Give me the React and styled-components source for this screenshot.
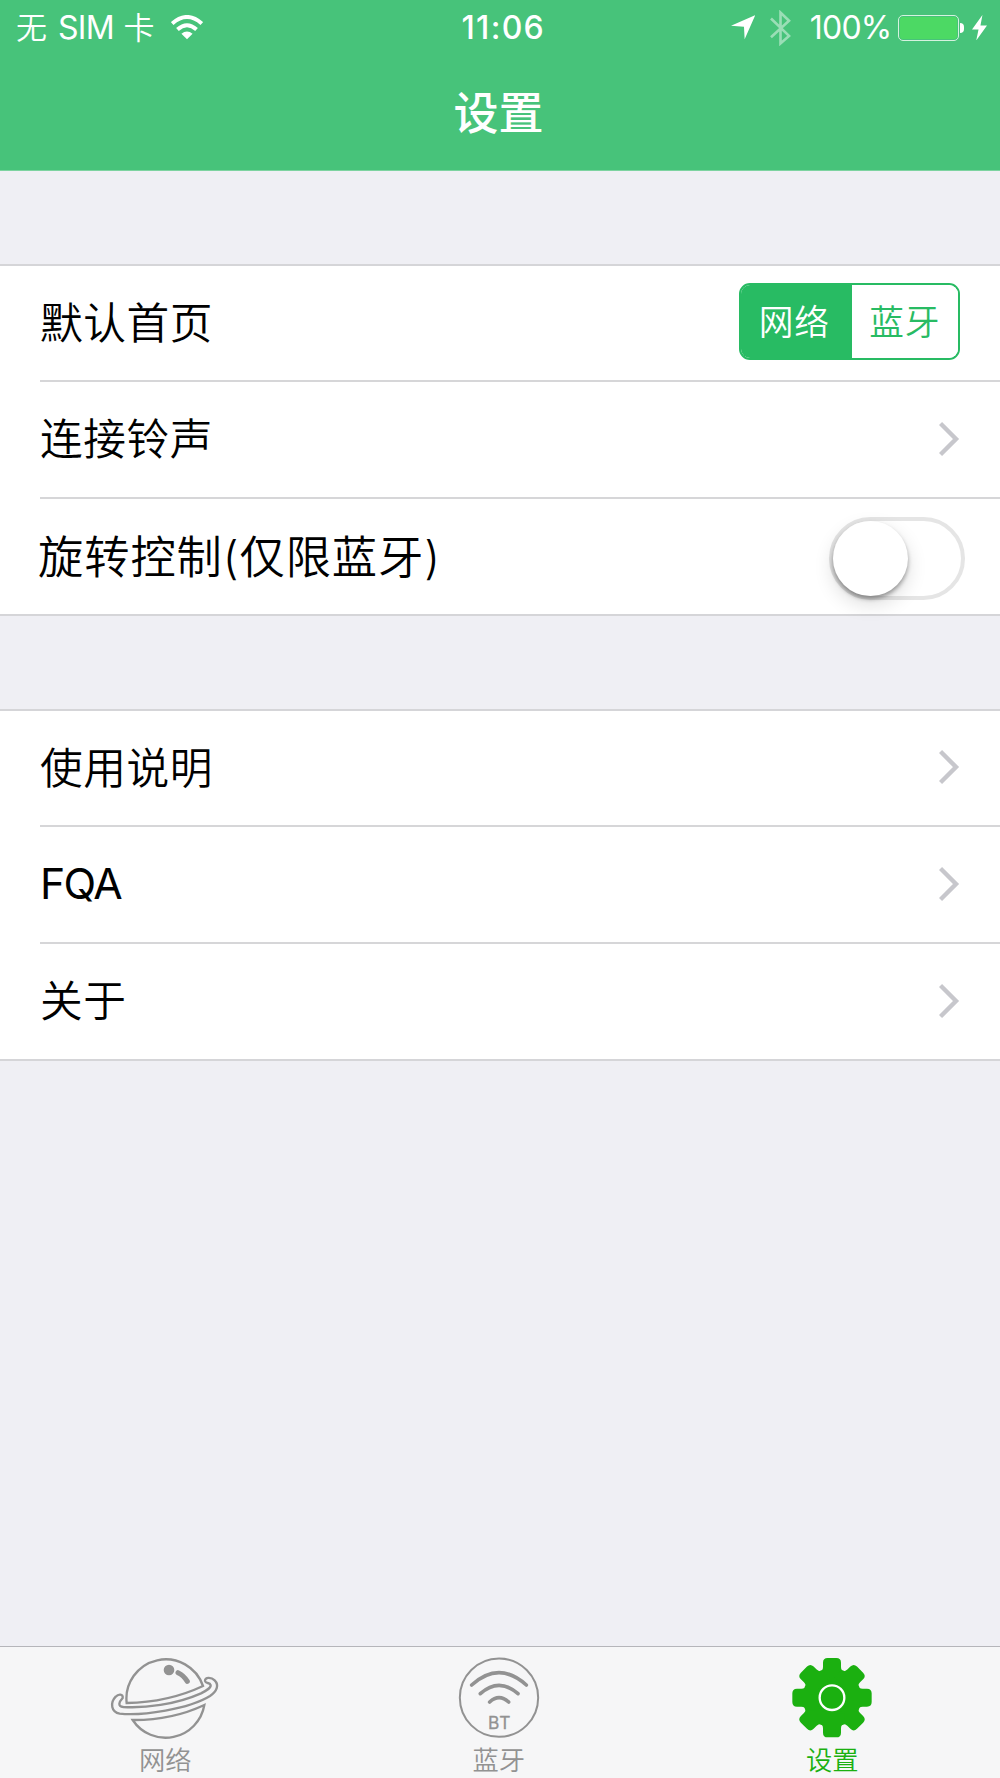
import React, { useState } from "react";
import styled, { createGlobalStyle } from "styled-components";

function App() {
  const [home, setHome] = useState("网络");
  const [rotate, setRotate] = useState(false);

  return (
    <Screen>
      <GlobalStyle />
      <Header>
        <StatusBar>
          <Carrier>
            <span>无</span>
            <Sim>SIM</Sim>
            <span>卡</span>
          </Carrier>
          <WifiIcon />
          <Time>11:06</Time>
          <LocationIcon />
          <BluetoothIcon />
          <Percent>100%</Percent>
          <Battery>
            <BatteryLevel />
          </Battery>
          <BatteryNub />
          <BoltIcon />
        </StatusBar>
        <Title>设置</Title>
      </Header>

      <Content>
        <Group>
          <Row>
            <Label>默认首页</Label>
            <Segmented>
              {["网络", "蓝牙"].map((name) => (
                <Segment
                  key={name}
                  $active={home === name}
                  onClick={() => setHome(name)}
                >
                  {name}
                </Segment>
              ))}
            </Segmented>
          </Row>
          <Row>
            <Label>连接铃声</Label>
            <Chevron />
          </Row>
          <Row>
            <Label $large>旋转控制(仅限蓝牙)</Label>
            <Switch $on={rotate} onClick={() => setRotate(!rotate)}>
              <Knob />
            </Switch>
          </Row>
        </Group>

        <Group>
          <Row>
            <Label>使用说明</Label>
            <Chevron />
          </Row>
          <Row>
            <LatinLabel>FQA</LatinLabel>
            <Chevron />
          </Row>
          <Row>
            <Label>关于</Label>
            <Chevron />
          </Row>
        </Group>
      </Content>

      <TabBar>
        <Tab>
          <PlanetIcon />
          <TabLabel>网络</TabLabel>
        </Tab>
        <Tab>
          <BtIcon />
          <TabLabel>蓝牙</TabLabel>
        </Tab>
        <Tab $active>
          <GearIcon />
          <TabLabel>设置</TabLabel>
        </Tab>
      </TabBar>
    </Screen>
  );
}

export default App;

/* Icons */

const WifiIcon = () => (
  <Wifi viewBox="0 0 96 76" fill="none" stroke="#fff" strokeWidth="12">
    <path d="M3 26Q48 -14 93 26" />
    <path d="M19 44Q48 18 77 44" />
    <path d="M31 57Q48 44 65 57L48 74Z" fill="#fff" stroke="none" />
  </Wifi>
);

const LocationIcon = () => (
  <Location viewBox="0 0 73 73">
    <path d="M0 32L73 0L41 73L39 35Z" fill="#fff" />
  </Location>
);

const BluetoothIcon = () => (
  <Bluetooth viewBox="0 0 64 108" fill="none" stroke="#fff" strokeWidth="8">
    <path d="M3 25L58 78L32 101V7L58 32L3 82" />
  </Bluetooth>
);

const BoltIcon = () => (
  <Bolt viewBox="0 0 46 78">
    <path d="M32 0L0 44H20L13 78L46 32H26Z" fill="#fff" />
  </Bolt>
);

const Chevron = () => (
  <ChevronSvg viewBox="0 0 21 36" fill="none" stroke="#c7c7cc">
    <path d="M1.5 2.5L17 18L1.5 33.5" strokeWidth="4.4" />
  </ChevronSvg>
);

const PlanetIcon = () => (
  <TabSvg $width={114} viewBox="57 66 342 246">
    <g fill="none" stroke="currentColor" strokeWidth="7">
      <path d="M113 204A118 118 0 0 1 342 153Q238 202 113 204Z" />
      <path d="M131 255Q248 256 346 210A118 118 0 0 1 131 255Z" />
      <path d="M101 189C103 176 88 176 80 185C62 204 67 232 92 236C160 243 300 222 363 183C384 169 391 150 377 136C367 126 347 126 348 138C350 147 362 141 365 150C366 160 350 168 336 175C260 209 165 220 103 216C84 214 91 200 101 189Z" />
    </g>
    <circle cx="240" cy="105" r="16" fill="currentColor" />
    <path
      d="M267 113Q284 121 295 139"
      fill="none"
      stroke="currentColor"
      strokeWidth="15"
      strokeLinecap="round"
    />
  </TabSvg>
);

const BtIcon = () => (
  <TabSvg $width={82} viewBox="83 66 246 246">
    <g fill="none" stroke="currentColor" strokeLinecap="round">
      <circle cx="206" cy="188" r="117.5" strokeWidth="6" />
      <path d="M124 150Q206 76 288 150" strokeWidth="11" />
      <path d="M150 176Q206 126 263 176" strokeWidth="11" />
      <path d="M178 201Q206 175 235 201" strokeWidth="11" />
    </g>
    <BtText x="208" y="283" textAnchor="middle">
      BT
    </BtText>
  </TabSvg>
);

const GearIcon = () => (
  <TabSvg $width={82} viewBox="93 66 246 246">
    <g fill="currentColor">
      <circle cx="216" cy="188" r="88" />
      {[0, 45, 90, 135, 180, 225, 270, 315].map((angle) => (
        <path
          key={angle}
          transform={`rotate(${angle} 216 188)`}
          d="M178 112Q189 108 189 96V83Q189 69 203 69H229Q243 69 243 83V96Q243 108 254 112V140H178Z"
        />
      ))}
    </g>
    <circle cx="216" cy="188" r="37" fill="none" stroke="#fff" strokeWidth="7" />
  </TabSvg>
);

/* Styles */

const GlobalStyle = createGlobalStyle`
  * {
    box-sizing: border-box;
  }
  body {
    margin: 0;
    background-color: #efeff4;
    font-family: Inter, "Noto Sans CJK SC", sans-serif;
  }
  svg {
    display: block;
    flex-shrink: 0;
  }
`;

const Screen = styled.div`
  display: flex;
  flex-direction: column;
  width: 1000px;
  height: 1778px;
  overflow: hidden;
  background-color: #efeff4;
`;

const Header = styled.header`
  height: 171px;
  background-color: #47c37a;
  border-bottom: 1px solid #7dd3a0;
  color: white;
`;

const StatusBar = styled.div`
  display: flex;
  align-items: center;
  height: 55px;
  padding-left: 16px;
`;

const Carrier = styled.div`
  display: flex;
  align-items: center;
  width: 155px;
  font-size: 31px;
  font-weight: 350;
  line-height: 54px;
`;

const Sim = styled.span`
  margin: 0 9.5px 0 11px;
  font-size: 32px;
  font-weight: 400;
  letter-spacing: -0.7px;
`;

const Wifi = styled.svg`
  width: 32px;
  height: 25px;
`;

const Time = styled.div`
  width: 84px;
  margin-left: 258.5px;
  font-size: 32px;
  font-weight: 550;
  letter-spacing: 1.3px;
`;

const Location = styled.svg`
  width: 24.3px;
  height: 24.3px;
  margin-left: 185px;
`;

const Bluetooth = styled.svg`
  width: 21px;
  height: 36px;
  margin-left: 15px;
  opacity: 0.45;
`;

const Percent = styled.div`
  width: 87.5px;
  padding-left: 19px;
  font-size: 32px;
  letter-spacing: -0.8px;
  white-space: nowrap;
`;

const Battery = styled.div`
  flex-shrink: 0;
  width: 61px;
  height: 26px;
  margin-left: 19.5px;
  padding: 1px;
  border: 1.5px solid #d5f2df;
  border-radius: 5px;
`;

const BatteryLevel = styled.div`
  height: 100%;
  border-radius: 3px;
  background-color: #4cd964;
`;

const BatteryNub = styled.div`
  width: 4px;
  height: 10px;
  margin-left: 1px;
  border-radius: 0 4px 4px 0;
  background-color: white;
`;

const Bolt = styled.svg`
  width: 15px;
  height: 25.5px;
  margin-left: 8px;
`;

const Title = styled.h1`
  margin: 0;
  padding-right: 3px;
  font-size: 45px;
  font-weight: 500;
  line-height: 117px;
  text-align: center;
`;

const Content = styled.main`
  flex: 1;
`;

const Group = styled.section`
  height: 352px;
  margin-top: 93px;
  border-top: 2px solid #d5d5d8;
  border-bottom: 2px solid #d5d5d8;
  background-color: white;
`;

const Row = styled.div`
  display: flex;
  align-items: center;
  justify-content: space-between;
  height: 114px;
  margin-left: 40px;
  padding-right: 40px;
  & + & {
    height: 117px;
    border-top: 2px solid #d6d6d8;
  }
`;

const Label = styled.div`
  margin-left: ${({ $large }) => ($large ? "-2px" : "0")};
  padding-top: 2px;
  font-size: ${({ $large }) => ($large ? "45.3px" : "42.7px")};
  font-weight: 350;
  letter-spacing: ${({ $large }) => ($large ? "0.9px" : "0.6px")};
  line-height: 1;
  color: black;
`;

const LatinLabel = styled(Label)`
  padding-top: 0;
  font-weight: 400;
  letter-spacing: -1.6px;
`;

const Segmented = styled.div`
  display: flex;
  width: 221px;
  height: 77px;
  margin-bottom: 4px;
  border: 2.5px solid #28bb63;
  border-radius: 11px;
  overflow: hidden;
`;

const Segment = styled.button`
  flex: 1;
  padding: 0 4px 3px 0;
  border: none;
  font-family: inherit;
  font-size: 34.7px;
  font-weight: 350;
  letter-spacing: 0.8px;
  background-color: ${({ $active }) => ($active ? "#28bb63" : "white")};
  color: ${({ $active }) => ($active ? "white" : "#28bb63")};

  & + & {
    padding-right: 0;
  }
`;

const ChevronSvg = styled.svg`
  width: 21px;
  height: 36px;
  margin-bottom: 2px;
`;

const Switch = styled.div`
  display: flex;
  justify-content: ${({ $on }) => ($on ? "flex-end" : "flex-start")};
  width: 136px;
  height: 83px;
  margin: 3px -5px 0 0;
  border: 4px solid ${({ $on }) => ($on ? "#28bb63" : "#e5e5e5")};
  border-radius: 42px;
  background-color: white;
`;

const Knob = styled.div`
  width: 75px;
  height: 75px;
  border-radius: 50%;
  background-color: white;
  box-shadow: 0 3px 4px rgba(0, 0, 0, 0.35), 0 8px 20px rgba(0, 0, 0, 0.14);
`;

const TabBar = styled.nav`
  display: grid;
  grid-template-columns: repeat(3, 333.5px);
  height: 132px;
  margin-left: -1px;
  border-top: 1.5px solid #b5b5ba;
  background-color: #f6f6f7;
`;

const Tab = styled.div`
  display: flex;
  flex-direction: column;
  align-items: center;
  padding-top: 10px;
  padding-right: 1px;
  color: ${({ $active }) => ($active ? "#1bb010" : "#929292")};
`;

const TabSvg = styled.svg`
  width: ${({ $width }) => $width}px;
  height: 82px;
`;

const TabLabel = styled.div`
  margin-top: 5.5px;
  font-size: 26.3px;
  font-weight: 350;
  line-height: 32px;
`;

const BtText = styled.text`
  font-size: 52px;
  letter-spacing: 3px;
  stroke: currentColor;
  fill: currentColor;
`;
